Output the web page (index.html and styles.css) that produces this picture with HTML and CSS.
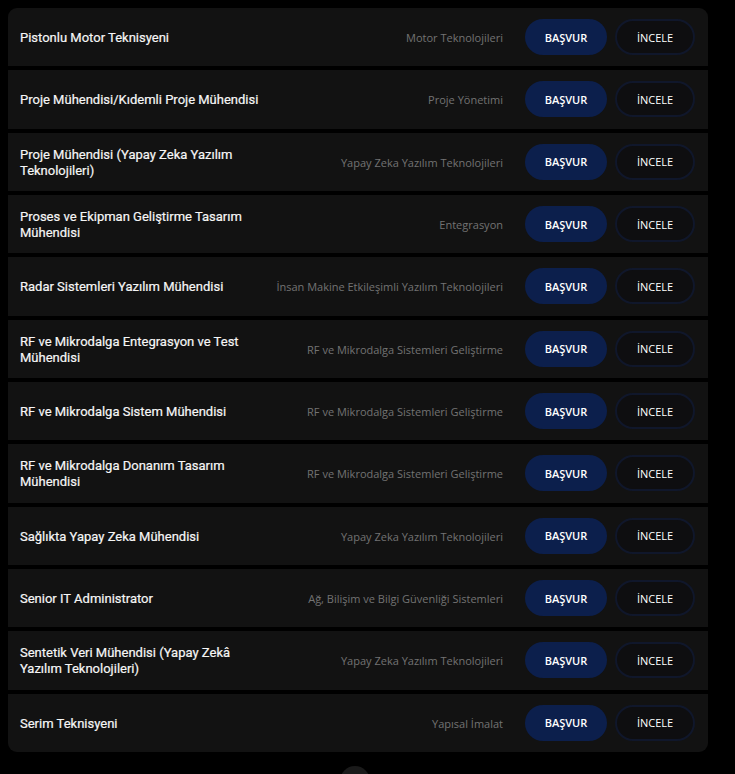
FILE: index.html
```html
<!DOCTYPE html>
<html>
<head>
    <title>Açık Pozisyonlar</title>
    <link rel="stylesheet" href="styles.css">
</head>
<body>
    <!-- Job list -->
    <div class="job-list">
        <div class="job-row">
            <div class="job-title">Pistonlu Motor Teknisyeni</div>
            <div class="job-category">Motor Teknolojileri</div>
            <button class="apply-btn">BAŞVUR</button>
            <button class="view-btn">İNCELE</button>
        </div>
        <div class="job-row">
            <div class="job-title">Proje Mühendisi/Kıdemli Proje Mühendisi</div>
            <div class="job-category">Proje Yönetimi</div>
            <button class="apply-btn">BAŞVUR</button>
            <button class="view-btn">İNCELE</button>
        </div>
        <div class="job-row">
            <div class="job-title">Proje Mühendisi (Yapay Zeka Yazılım Teknolojileri)</div>
            <div class="job-category">Yapay Zeka Yazılım Teknolojileri</div>
            <button class="apply-btn">BAŞVUR</button>
            <button class="view-btn">İNCELE</button>
        </div>
        <div class="job-row">
            <div class="job-title">Proses ve Ekipman Geliştirme Tasarım Mühendisi</div>
            <div class="job-category">Entegrasyon</div>
            <button class="apply-btn">BAŞVUR</button>
            <button class="view-btn">İNCELE</button>
        </div>
        <div class="job-row">
            <div class="job-title">Radar Sistemleri Yazılım Mühendisi</div>
            <div class="job-category">İnsan Makine Etkileşimli Yazılım Teknolojileri</div>
            <button class="apply-btn">BAŞVUR</button>
            <button class="view-btn">İNCELE</button>
        </div>
        <div class="job-row">
            <div class="job-title">RF ve Mikrodalga Entegrasyon ve Test Mühendisi</div>
            <div class="job-category">RF ve Mikrodalga Sistemleri Geliştirme</div>
            <button class="apply-btn">BAŞVUR</button>
            <button class="view-btn">İNCELE</button>
        </div>
        <div class="job-row">
            <div class="job-title">RF ve Mikrodalga Sistem Mühendisi</div>
            <div class="job-category">RF ve Mikrodalga Sistemleri Geliştirme</div>
            <button class="apply-btn">BAŞVUR</button>
            <button class="view-btn">İNCELE</button>
        </div>
        <div class="job-row">
            <div class="job-title">RF ve Mikrodalga Donanım Tasarım Mühendisi</div>
            <div class="job-category">RF ve Mikrodalga Sistemleri Geliştirme</div>
            <button class="apply-btn">BAŞVUR</button>
            <button class="view-btn">İNCELE</button>
        </div>
        <div class="job-row">
            <div class="job-title">Sağlıkta Yapay Zeka Mühendisi</div>
            <div class="job-category">Yapay Zeka Yazılım Teknolojileri</div>
            <button class="apply-btn">BAŞVUR</button>
            <button class="view-btn">İNCELE</button>
        </div>
        <div class="job-row">
            <div class="job-title">Senior IT Administrator</div>
            <div class="job-category">Ağ, Bilişim ve Bilgi Güvenliği Sistemleri</div>
            <button class="apply-btn">BAŞVUR</button>
            <button class="view-btn">İNCELE</button>
        </div>
        <div class="job-row">
            <div class="job-title">Sentetik Veri Mühendisi (Yapay Zekâ Yazılım Teknolojileri)</div>
            <div class="job-category">Yapay Zeka Yazılım Teknolojileri</div>
            <button class="apply-btn">BAŞVUR</button>
            <button class="view-btn">İNCELE</button>
        </div>
        <div class="job-row">
            <div class="job-title">Serim Teknisyeni</div>
            <div class="job-category">Yapısal İmalat</div>
            <button class="apply-btn">BAŞVUR</button>
            <button class="view-btn">İNCELE</button>
        </div>
    </div>

    <!-- Scroll button (partly visible) -->
    <div class="more-btn"></div>
</body>
</html>
```

FILE: styles.css
```css
/* Page */
body {
    margin: 8px;
    background-color: #000;
    font-family: Roboto, "Liberation Sans", sans-serif;
    color: #fff;
    overflow: hidden;
}

/* List container */
.job-list {
    width: 700px;
    display: flex;
    flex-direction: column;
    gap: 4px;
    border-radius: 9px;
    overflow: hidden;
}

.job-row {
    height: 58.33px;
    display: flex;
    align-items: center;
    padding: 0 13px 0 12px;
    background-color: #121212;
}

.job-title {
    width: 255px;
    padding-top: 2px;
    font-size: 13px;
    font-weight: 400;
    line-height: 16px;
    color: #f6f6f6;
    -webkit-text-stroke: 0.2px #f6f6f6;
}

.job-category {
    margin-left: auto;
    margin-right: 22px;
    padding-top: 1px;
    font-family: "Open Sans", sans-serif;
    font-size: 11px;
    color: #727272;
}

/* Buttons */
.apply-btn,
.view-btn {
    height: 36px;
    border-radius: 18px;
    font-family: "Open Sans", sans-serif;
    font-size: 11px;
    font-weight: 600;
    color: #fff;
    cursor: pointer;
}

.apply-btn {
    width: 82px;
    background-color: #0c1f4c;
    border: none;
}

.view-btn {
    width: 80px;
    margin-left: 8px;
    background-color: #0e0e10;
    border: 2px solid #10172b;
    font-weight: 500;
}

.more-btn {
    width: 30px;
    height: 30px;
    margin: 14px 0 0 332px;
    border-radius: 50%;
    background-color: #1a1a1a;
}
```
